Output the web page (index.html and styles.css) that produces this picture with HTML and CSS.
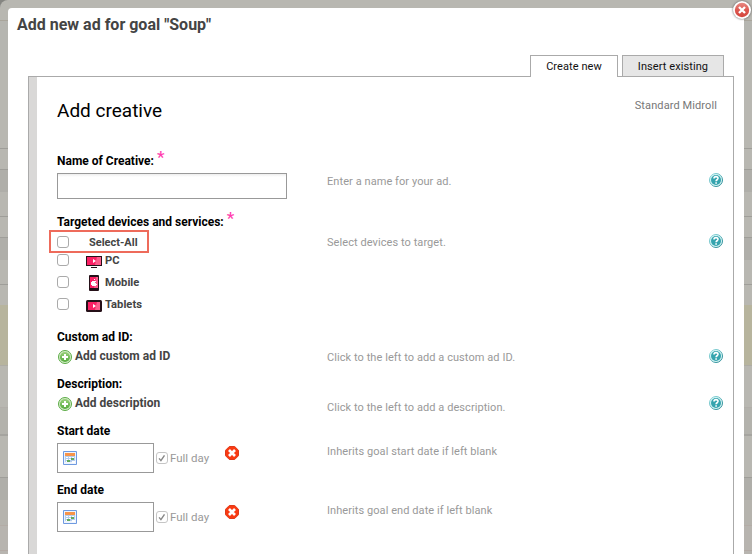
FILE: index.html
```html
<!DOCTYPE html>
<html lang="en">
<head>
<meta charset="utf-8">
<title>Add new ad</title>
<link rel="stylesheet" href="styles.css">
</head>
<body>
<svg width="0" height="0" class="defs">
  <defs>
    <linearGradient id="gTeal" x1="0" y1="0" x2="1" y2="1"><stop offset="0" stop-color="#9be3e6"/><stop offset="1" stop-color="#167c88"/></linearGradient>
    <linearGradient id="gGreen" x1="0" y1="0" x2="0" y2="1"><stop offset="0" stop-color="#9ad07c"/><stop offset="1" stop-color="#55ab3e"/></linearGradient>
    <linearGradient id="gRed" x1="0" y1="0" x2="0" y2="1"><stop offset="0" stop-color="#e88a84"/><stop offset=".5" stop-color="#dc5850"/><stop offset="1" stop-color="#d4443c"/></linearGradient>
    <symbol id="help" viewBox="0 0 14 14"><circle cx="7" cy="7" r="6.5" fill="#d9f6f6" stroke="url(#gTeal)"/><circle cx="7" cy="7" r="5" fill="#35a4ae"/><path d="M5 5.6C5 3 9 3 9 5.3 9 6.8 7.1 6.7 7.1 8.2M7.1 9.3v1.5" fill="none" stroke="#fff" stroke-width="1.6"/></symbol>
    <symbol id="plus" viewBox="0 0 14 14"><circle cx="7" cy="7" r="6.5" fill="#d6edca" stroke="#5bab45"/><circle cx="7" cy="7" r="5.1" fill="url(#gGreen)"/><path d="M7 4v6M4 7h6" stroke="#fff" stroke-width="2"/></symbol>
    <symbol id="remove" viewBox="0 0 14 14"><path d="M4.3.5h5.4l3.8 3.8v5.4l-3.8 3.8H4.3L.5 9.7V4.3z" fill="#f93a12" stroke="#e03a1a"/><path d="M4 4l6 6M10 4l-6 6" stroke="#fff" stroke-width="2.7"/></symbol>
    <symbol id="cal" viewBox="0 0 14 14"><path d="M.5.5h13v13H.5z" fill="#eef4fd" stroke="#6f9ae0"/><path d="M2 2h10v3H2z" fill="#f7944a"/><path d="M2 5h10v6H2z" fill="#b5cdec"/><path d="M3 6h2v1H3zM6 6h2v1H6zM9 6h2v1H9zM3 8h2v1H3zM6 8h2v1H6zM3 10h1v1H3zM9 10h3v2H9z" fill="#fff"/><path d="M8 7h3v2H8zM4 9h3v2H4z" fill="#62a95b"/></symbol>
  </defs>
</svg>
<main class="modal">
  <svg class="close" viewBox="0 0 20 20"><circle cx="10" cy="10" r="9" fill="#fff"/><circle cx="10" cy="10" r="7.2" fill="url(#gRed)"/><path d="M7 7l6 6M13 7l-6 6" stroke="#fff" stroke-width="2.3"/></svg>
  <h1>Add new ad for goal "Soup"</h1>
  <nav class="tabs"><span class="tab active">Create new</span><span class="tab">Insert existing</span></nav>
  <section class="panel">
    <header><h2>Add creative</h2><span class="kind">Standard Midroll</span></header>

    <div class="row name">
      <div><label class="label">Name of Creative:<sup>*</sup></label><div class="input"></div></div>
      <p class="h-name">Enter a name for your ad.</p><svg class="ic"><use href="#help"/></svg>
    </div>

    <div class="row devices">
      <div>
        <label class="label">Targeted devices and services:<sup>*</sup></label>
        <div class="opt all"><i class="box"></i><b>Select-All</b></div>
        <div class="opt pc"><i class="box"></i><svg width="16" height="13"><path d="M0 1h16v10H0zM5 12h6v1H5z" fill="#251018"/><path d="M1 2h14v8H1z" fill="#fb1f64"/><path d="M11 2h4v8H9z" fill="#fc5d8c"/><path d="M7 4l3 2-3 2z" fill="#fff"/></svg><b>PC</b></div>
        <div class="opt"><i class="box"></i><svg width="16" height="16"><rect x="3" width="10" height="16" rx="1" fill="#251018"/><path d="M4 2h8v11H4z" fill="#fb1f64"/><path d="M10 2h2v11H8z" fill="#fc5d8c"/><path d="M8 4h1v1H8zM6 6h4v1H9v1h1v1h1v1h-1v1H6v-1H5V7h1z" fill="#fff"/></svg><b>Mobile</b></div>
        <div class="opt"><i class="box"></i><svg width="16" height="13"><rect y="1" width="16" height="12" rx="1.5" fill="#251018"/><path d="M2 3h11v8H2z" fill="#fb1f64"/><path d="M11 3h3v8H9z" fill="#fc5d8c"/><path d="M7 5l3 2-3 2z" fill="#fff"/></svg><b>Tablets</b></div>
      </div>
      <p class="h-dev">Select devices to target.</p><svg class="ic"><use href="#help"/></svg>
    </div>

    <div class="row custom">
      <div><label class="label">Custom ad ID:</label><div class="add"><svg class="plus"><use href="#plus"/></svg><b>Add custom ad ID</b></div></div>
      <p class="h-cus">Click to the left to add a custom ad ID.</p><svg class="ic"><use href="#help"/></svg>
    </div>

    <div class="row desc">
      <div><label class="label">Description:</label><div class="add"><svg class="plus"><use href="#plus"/></svg><b>Add description</b></div></div>
      <p class="h-des">Click to the left to add a description.</p><svg class="ic"><use href="#help"/></svg>
    </div>

    <div class="row date">
      <div><label class="label">Start date</label><div class="dateline"><div class="input short"><svg class="cal"><use href="#cal"/></svg></div><i class="box checked"><svg viewBox="0 0 12 12"><path d="M2.5 6.5l2.2 2.7L9 2.8"/></svg></i><span>Full day</span><svg class="rem"><use href="#remove"/></svg></div></div>
      <p class="h-st">Inherits goal start date if left blank</p>
    </div>
    <div class="row date">
      <div><label class="label">End date</label><div class="dateline"><div class="input short"><svg class="cal"><use href="#cal"/></svg></div><i class="box checked"><svg viewBox="0 0 12 12"><path d="M2.5 6.5l2.2 2.7L9 2.8"/></svg></i><span>Full day</span><svg class="rem"><use href="#remove"/></svg></div></div>
      <p class="h-st">Inherits goal end date if left blank</p>
    </div>
  </section>
</main>
</body>
</html>
```
FILE: styles.css
```css
* { box-sizing: border-box; }
html { background: #858581; }
body {
  margin: 0; width: 752px; height: 554px; padding: 8px 8px 0; overflow: hidden;
  font-family: Roboto, sans-serif; font-size: 11px; border-top-left-radius: 8px;
  background: linear-gradient(to bottom,
    #b8b7b1 0 20px, #a9a59b 20px 21px, #b5b5b0 21px 70px, #b8b7b1 70px 148px, #9f9e99 148px 149px, #b8b7b1 149px 169px,
    #9f9e99 169px 170px, #afaea9 170px 192px, #b8b7b1 192px 216px, #9f9e99 216px 217px, #b8b7b1 217px 237px,
    #9f9e99 237px 238px, #afaea9 238px 260px, #b8b7b1 260px 284px, #9f9e99 284px 285px, #b8b7b1 285px 305px,
    #b7b49d 305px 365px, #aeaca4 365px 366px, #b8b7b1 366px 407px, #b1aea9 407px 408px, #b3b2ac 408px 434px,
    #a5a49f 434px 436px, #b8b7b1 436px 477px, #9f9e99 477px 478px, #afaea9 478px 500px, #b5b3ad 500px 525px,
    #b3aca6 525px 526px, #b7b4af 526px 550px, #b3aaa5 550px 551px, #b8b5b0 551px);
}
.defs { position: absolute; }
h1, h2, p { margin: 0; font-weight: 400; }
.modal { position: relative; height: 546px; background: #fff; border-radius: 4px 0 0 0; padding: 0 10px 0 20px; display: flex; flex-direction: column; }
.close { position: absolute; right: -8px; top: -8px; width: 20px; height: 20px; filter: drop-shadow(0 0 1px #555); }
h1 { height: 47px; margin-left: -11px; padding-top: 7px; font-size: 16px; line-height: 19px; font-weight: 700; color: #444; white-space: nowrap; }
.tabs { display: flex; justify-content: flex-end; gap: 4px; height: 21px; padding-right: 10px; }
.tab { height: 21px; border: 1px solid #aaa; border-bottom: 0; background: #e6e6e6; width: 102px; text-align: center; line-height: 21px; letter-spacing: .08px; color: #111; }
.tab.active { width: 88px; height: 22px; background: #fff; position: relative; }
.panel { flex: 1; border: 1px solid #aaa; border-bottom: 0; padding-left: 28px; background: linear-gradient(to right, #d9d8d7 8px, #fff 8px); }
header { display: flex; justify-content: space-between; height: 73px; padding-right: 16px; }
h2 { font-size: 19px; line-height: 22px; padding-top: 23px; color: #000; }
.kind { line-height: 14px; padding-top: 22px; letter-spacing: .1px; color: #777; }
.row { display: grid; grid-template-columns: 270px 1fr 14px; padding-right: 10px; align-items: start; }
.name { height: 61px; }
.devices { height: 116px; }
.custom, .desc { height: 47px; }
.date { height: 59px; }
.label { display: block; height: 23px; padding-top: 4px; font-size: 12px; line-height: 14px; font-weight: 700; color: #000; white-space: nowrap; }
sup { font-size: 17px; line-height: 0; font-weight: 500; color: #ff3fae; margin-left: 3px; vertical-align: 2px; }
.input { width: 230px; height: 26px; border: 1px solid #999; background: linear-gradient(#eee, #fff 3px); }
.row p { line-height: 14px; letter-spacing: .07px; color: #999; white-space: nowrap; }
.ic { width: 14px; height: 14px; }
.h-name { padding-top: 25px; }
.name .ic { margin-top: 23px; }
.h-dev { padding-top: 25px; }
.devices .ic { margin-top: 23px; }
.devices .label { height: 19px; }
.opt { display: flex; align-items: center; height: 22px; color: #444; }
.opt svg { margin-left: 17px; margin-right: 3px; position: relative; top: 1px; }
.opt b { font-size: 11.2px; line-height: 14px; padding-top: 2px; }
.add b { font-size: 12px; line-height: 14px; }
.box { display: block; width: 12px; height: 12px; border: 1px solid #aaa; border-radius: 3px; background: #fff; }
.all { width: 100px; height: 23px; border: 2px solid #ee6b5b; margin-left: -8px; padding-left: 6px; }
.opt.all b { margin-left: 20px; padding-top: 2px; font-size: 11px; }
.pc { height: 18px; padding-bottom: 4px; }
.custom .label, .desc .label { height: 22px; padding-top: 3px; }
.h-cus { padding-top: 24px; }
.custom .ic, .desc .ic { margin-top: 22px; }
.h-des { padding-top: 27px; }
.add { display: flex; height: 14px; gap: 3px; padding-left: 1px; color: #444; }
.plus { width: 14px; height: 14px; position: relative; top: 1px; }
.date .label { height: 22px; padding-top: 3px; }
.dateline { display: flex; align-items: center; height: 30px; color: #999; }
.input.short { width: 97px; height: 30px; padding: 7px 5px; background: #fff; }
.cal { display: block; width: 14px; height: 14px; }
.checked { margin-left: 2px; border-color: #c5c5c5; }
.checked svg { display: block; width: 10px; height: 10px; fill: none; stroke: #888; stroke-width: 1.7; }
.dateline span { width: 55px; margin-left: 2px; font-size: 11.5px; line-height: 14px; padding-bottom: 1px; }
.rem { width: 14px; height: 14px; margin-bottom: 10px; }
.h-st { padding-top: 24px; }
```
